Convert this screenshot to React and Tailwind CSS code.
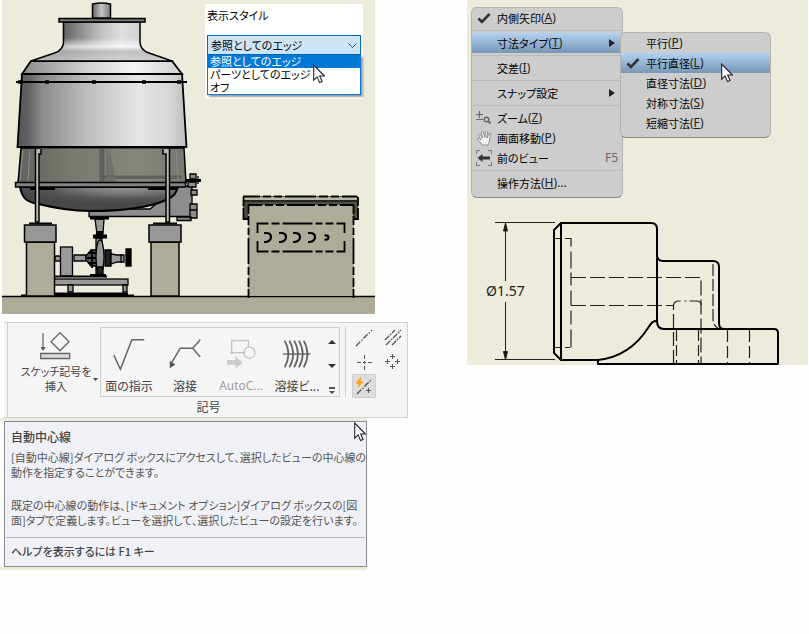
import { useState } from "react";

const jpFont = "font-['Noto_Sans_CJK_JP',sans-serif] [font-feature-settings:'palt','kern']";

const edgeStyles = ["参照としてのエッジ", "パーツとしてのエッジ", "オフ"];

const menuGroups = [
  [{ label: "内側矢印", hotkey: "A", icon: "check" }],
  [{ label: "寸法タイプ", hotkey: "T", active: true, arrow: true }],
  [{ label: "交差", hotkey: "I" }],
  [{ label: "スナップ設定", arrow: true }],
  [
    { label: "ズーム", hotkey: "Z", icon: "zoom" },
    { label: "画面移動", hotkey: "P", icon: "pan" },
    { label: "前のビュー", shortcut: "F5", icon: "back" }
  ],
  [{ label: "操作方法", hotkey: "H", more: true }]
];

const dimensionTypes = [
  { label: "平行", hotkey: "P" },
  { label: "平行直径", hotkey: "L", active: true, icon: "check" },
  { label: "直径寸法", hotkey: "D" },
  { label: "対称寸法", hotkey: "S" },
  { label: "短縮寸法", hotkey: "F" }
];

function Cursor({ className }) {
  return (
    <svg className={`pointer-events-none absolute h-5 w-3 ${className}`} viewBox="0 0 12 20" aria-hidden="true">
      <path d="M.7 1v15.2l3.4-3.3 2.5 5.7 2.5-1.1-2.4-5.5h4.7z" fill="#fff" stroke="#222233" strokeWidth="1.1" />
    </svg>
  );
}

function TankDrawing() {
  return (
    <svg className="block w-full" viewBox="2 0 373 314" aria-hidden="true">
      <defs>
        <linearGradient id="shell" x1="0" x2="1">
          <stop offset="0" stopColor="#555" />
          <stop offset=".07" stopColor="#656565" />
          <stop offset=".15" stopColor="#8c8c8c" />
          <stop offset=".4" stopColor="#bcbcbc" />
          <stop offset=".72" stopColor="#e6e6e6" />
          <stop offset=".9" stopColor="#d6d6d6" />
          <stop offset="1" stopColor="#bdbdbd" />
        </linearGradient>
        <linearGradient id="neck" gradientUnits="userSpaceOnUse" x1="63" x2="141" y1="0" y2="0">
          <stop offset="0" stopColor="#606060" />
          <stop offset=".2" stopColor="#8a8a8a" />
          <stop offset=".5" stopColor="#c2c2c2" />
          <stop offset=".75" stopColor="#e0e0e0" />
          <stop offset="1" stopColor="#cfcfcf" />
        </linearGradient>
        <linearGradient id="band" x1="0" x2="1">
          <stop offset="0" stopColor="#8b8b8b" />
          <stop offset=".4" stopColor="#d0d0d0" />
          <stop offset=".7" stopColor="#f5f5f5" />
          <stop offset="1" stopColor="#cfcfcf" />
        </linearGradient>
        <linearGradient id="shoulder" x1="0" y1="0" x2="0" y2="1">
          <stop offset=".4" stopColor="#fff" stopOpacity="0" />
          <stop offset=".63" stopColor="#fff" stopOpacity=".7" />
          <stop offset=".75" stopColor="#bcbcbc" stopOpacity=".8" />
          <stop offset="1" stopColor="#cfcfcf" stopOpacity=".8" />
        </linearGradient>
        <linearGradient id="lower" x1="0" x2="1">
          <stop offset="0" stopColor="#62625f" />
          <stop offset=".3" stopColor="#77786f" />
          <stop offset=".7" stopColor="#85867d" />
          <stop offset="1" stopColor="#77786f" />
        </linearGradient>
        <radialGradient id="bowl" cx=".66" cy="0" r=".7">
          <stop offset="0" stopColor="#969696" />
          <stop offset=".35" stopColor="#7d7d7d" />
          <stop offset=".7" stopColor="#555" />
          <stop offset="1" stopColor="#484848" />
        </radialGradient>
        <linearGradient id="pipe" x1="0" x2="1">
          <stop offset="0" stopColor="#666" />
          <stop offset=".5" stopColor="#c4c4c4" />
          <stop offset="1" stopColor="#777" />
        </linearGradient>
      </defs>

      <rect x="2" width="373" height="314" fill="#ecebdc" />
      <rect x="2" y="296" width="373" height="18" fill="#aeab98" />
      <path d="M2 296.5h373" stroke="#000" strokeWidth="1.5" />

      {/* outlet box and side flanges */}
      <g stroke="#000" strokeWidth="1.3" fill="#8d8d8d">
        <path d="M89 209H150L178 186h14v30.500H89z" />
        <path d="M177 217h14v3.500h-14zM190 174h6v5h-6zM188 182h8v5h-8zM191 190h6v5h-6zM190 204h7v6h-7zM190 210h7v8h-7z" />
        <path d="M185 180.500h16" strokeWidth="3" />
        <path d="M198 176v8" />
      </g>

      {/* bowl and translucent wall */}
      <path d="M20 187c2 9 5 14 14 16 20 5 38 8 56 8 31 0 60-4 76-11 8-3 10-7 12-13z" fill="url(#bowl)" stroke="#000" strokeWidth="2" />
      <path d="M21 148h163l2 35H18z" fill="url(#lower)" stroke="#000" strokeWidth="1.500" />
      <path d="M100 149h4v27h78v3h-78v4h-4z" fill="#64645f" />
      <path d="M106 151h4l6 31h-10z" fill="#70716a" />
      <path d="M23 150l-3 31M30 150l-2 31M176 150l2 31" stroke="#8d8e84" />
      <path d="M100 149v33M104 149v33M104 176h78" stroke="#55554f" strokeWidth=".7" />
      <path d="M40 148.500h124" stroke="#48483f" />
      <rect x="15.500" y="182.500" width="170" height="4.500" fill="#858585" stroke="#000" strokeWidth="1.500" />
      <path d="M30 189h25M148 189h30" stroke="#000" strokeWidth="2" />

      {/* shell */}
      <path d="M22 74h160l4.500 73h-169z" fill="url(#shell)" stroke="#000" strokeWidth="1.800" />
      <path d="M31 61h141l10 13H22z" fill="url(#band)" stroke="#000" strokeWidth="1.800" />
      <path d="M63.500 22v20c0 6-3 9-9 11L31 61h141l-23-8c-6-2-9-6-9-11V22z" fill="url(#neck)" />
      <path d="M63.500 22v20c0 6-3 9-9 11L31 61h141l-23-8c-6-2-9-6-9-11V22z" fill="url(#shoulder)" stroke="#000" strokeWidth="1.500" />
      <path d="M16 82h171" stroke="#000" strokeWidth="1.800" />
      <path d="M18 82h5M45 82h4M92 82h4M142 82h4M177 82h4" stroke="#000" strokeWidth="3.500" />
      <path d="M17 147h170" stroke="#000" strokeWidth="2" />
      <rect x="59" y="18.500" width="86" height="3.500" fill="#777" stroke="#000" strokeWidth="1.500" />
      <path d="M92.500 18V4q9-2 18 0v14z" fill="url(#pipe)" stroke="#000" strokeWidth="1.500" />

      {/* legs */}
      <path d="M35.500 149v73h3.500v-68h2v-5M169.500 149v73H166v-68h-3v-5" fill="#b9b9b7" stroke="#000" strokeWidth="1.500" />

      {/* pump */}
      <g stroke="#000" strokeWidth="1.300" fill="#999">
        <path d="M95 219h9l-1 15h-6zM96 238h6v38h-6z" />
        <path d="M90 218h19" strokeWidth="3" />
        <path d="M93 236.500h14M96 233h7" strokeWidth="4" />
        <path d="M55 256h6v5h-6zM74 255h12v6H74z" />
        <rect x="60.500" y="247" width="12" height="29" />
        <path d="M86 256l5-6h6v16h-6l-5-6z" fill="#555" />
        <path d="M88 253h12M87 258h12M88 263h12M92 249v19" strokeWidth="1.800" />
        <ellipse cx="100" cy="257" rx="4" ry="17" />
        <path d="M105 250h6v16h-6z" fill="#222" />
        <path d="M111 254l6 1h7v7h-7l-6 2zM121 254v9" />
        <path d="M126 249h5v17h-5z" fill="#000" />
        <path d="M97 267h6v7h-6z" fill="#222" />
        <path d="M55 276.500h52M90 275h16" strokeWidth="2" />
        <rect x="54" y="279" width="74" height="6" />
        <path d="M68 285h5v7h-5zM123 285h4v7h-4z" />
        <path d="M55 293.500h73M55 295.500h79" strokeWidth="1.800" />
      </g>

      {/* pedestals */}
      <g stroke="#000" strokeWidth="1.500">
        <path d="M26.500 242h28v54h-28zM151 242h28v54h-28z" fill="#aeab98" />
        <path d="M24.500 225h31.500v17H24.500zM149 225h32v17h-32z" fill="#989898" />
        <path d="M29 223.500h23M153 223.500h24" strokeWidth="2" />
        <path d="M21 295.500h6" strokeWidth="2" />
      </g>

      {/* cabinet */}
      <path d="M248 205h106v91H248z" fill="#aeab98" />
      <path d="M243 196h115v23h-5v-14H248v14h-5z" fill="#4d4e42" />
      <path d="M244 197h113v3H244z" fill="#b7b8a0" />
      <g fill="none" stroke="#000" strokeWidth="1.800">
        <path d="M243 196.500h17m3 0h8m3 0h8m3 0h31m3 0h9m3 0h8m3 0h15" />
        <path d="M244 201h113" strokeWidth="1.200" />
        <path d="M248 205h14m3 0h8m3 0h8m3 0h28m3 0h8m3 0h8m3 0h14" />
        <path d="M243.500 197v9m0 2v11h5M358 197v9m0 2v11h-5" />
        <path d="M248.500 205v9m0 2v9m0 3v7m0 3v26m0 3v8m0 3v9m0 2v9M353.500 205v9m0 2v9m0 3v7m0 3v26m0 3v8m0 3v9m0 2v9" />
        <path d="M257.500 233v-9.500h11m3 0h8m3 0h30m3 0h7m3 0h8m3 0h8V233M257.500 241v10.500h11m3 0h8m3 0h30m3 0h7m3 0h8m3 0h8V241" />
        <path
          d="M264 233h2q5 0 5 4t-5 5h-2M279 233h2q5 0 5 4t-5 5h-2M293 233h2q5 0 5 4t-5 5h-2M308 233h2q5 0 5 4t-5 5h-2M324.500 235.500q4-.5 4 2t-4 2"
          strokeWidth="2.200"
        />
      </g>
    </svg>
  );
}

function PartDrawing() {
  return (
    <svg className="mt-3 block w-full" viewBox="467 210 341 155" role="img" aria-label="Ø1.57">
      <g fill="none" stroke="#222" strokeWidth="1">
        <path d="M495 222.500h60M495 359.500h60M505.500 224v57M505.500 302v57" />
        <path d="M505.500 223l-2 8h4zM505.500 359.500l-2-8h4z" fill="#111" />
      </g>
      <text x="486" y="296" className="fill-[#222] font-['Noto_Sans',sans-serif] text-[14px]">
        Ø1.57
      </text>
      <g fill="none" stroke="#222" strokeWidth="1.200">
        <path d="M554 238.500h6m5 0h6v8m0 5v17m0 4v13m0 5v15m0 5v14m0 5v18m-1 0h-5m-5 0h-6" />
        <path d="M571 277.500h130v87" strokeDasharray="15 4" />
        <path d="M571 305.500h103" strokeDasharray="15 4" />
        <path d="M673.500 364v-59q1-4 5-4h8m3 0h7q4 0 5 4" strokeDasharray="14 4" />
        <path d="M676.500 330v34M698.500 330v34" strokeDasharray="11 4" />
        <path d="M727.500 330v34M749.500 330v34" strokeDasharray="12 4" />
        <path d="M713 264v54q0 8 5 10" strokeDasharray="12 3" />
      </g>
      <g fill="none" stroke="#000" strokeWidth="2" strokeLinejoin="round">
        <path d="M598 360H561l-7-7V230l7-7h90q6 0 6 6v92M561 223v137" />
        <path d="M657 255q0 6 6 6h50q6 0 6 6v56q0 6 5 6" />
        <path d="M598 360c27-3 41-18 50-32 4-6 5-7 9-7q0 8 7 8h110q4 0 4 4v31H598z" />
      </g>
    </svg>
  );
}

function MenuIcon({ name }) {
  return (
    <svg className="h-4 w-4" viewBox="0 0 16 16" fill="none" aria-hidden="true">
      {name === "check" && <path d="M2.500 8.500l3.500 3.500 7.500-8" stroke="#333" strokeWidth="2.600" />}
      {name === "zoom" && (
        <>
          <path d="M0 4.500h7M3.500 1v7M0 9.500h7" stroke="#666" strokeWidth="1.200" />
          <circle cx="10.500" cy="9.500" r="2.300" stroke="#666" strokeWidth="1.400" />
          <path d="M12 11l2.500 2.500" stroke="#666" strokeWidth="1.800" />
        </>
      )}
      {name === "pan" && (
        <path
          d="M6 15c-1-3-4-4-5-6 1-1 3 0 4 1L2.500 4.500q1-1 2 0L6.500 8 5.500 2q1-1 2 0L9 7.500 9.500 2q1-1 2 0L11 8l2-4.500q1.500-.5 1.500.5L13.500 10c0 2-1 3-1.500 5z"
          fill="#f5f5f5"
          stroke="#777"
          strokeWidth=".8"
        />
      )}
      {name === "back" && (
        <>
          <path d="M4 .5H.5V4M12 .5h3.500V4M4 15.500H.5V12M12 15.500h3.500V12" stroke="#777" />
          <path d="M1.500 8l5-4v2.500H14v3H6.500V12z" fill="#333" />
        </>
      )}
    </svg>
  );
}

function MenuRow({ item }) {
  return (
    <button
      type="button"
      role="menuitem"
      className={`flex h-5 w-full items-center whitespace-nowrap pr-1 text-left text-[11px] leading-5 text-black ${
        item.active ? "bg-linear-to-b from-[#b3d2f2] to-[#7897b6]" : ""
      }`}
    >
      <span className="flex w-[25px] shrink-0 pl-1">{item.icon && <MenuIcon name={item.icon} />}</span>
      <span>{item.label}</span>
      {item.hotkey && (
        <span className="font-['Noto_Sans',sans-serif] text-[12px] text-[#222]">
          (<u>{item.hotkey}</u>){item.more && "..."}
        </span>
      )}
      {item.shortcut && <span className="ml-auto font-['Noto_Sans',sans-serif] text-[12px] text-[#666]">{item.shortcut}</span>}
      {item.arrow && (
        <svg className="ml-auto mr-0.5 h-2 w-2" viewBox="0 0 8 8" aria-hidden="true">
          <path d="M1 0l6 4-6 4z" fill="#222" />
        </svg>
      )}
    </button>
  );
}

function ContextMenu() {
  return (
    <div
      role="menu"
      className={`relative h-[191px] w-38 rounded-md border border-[#b4b4ac] border-b-[#888] bg-[#cdcdcd] ${jpFont}`}
    >
      {menuGroups.map((group, i) => (
        <div key={group[0].label}>
          {i > 0 && (
            <div className="flex h-[5px] items-center">
              <div className="h-px w-full bg-[#bababa]" />
            </div>
          )}
          {group.map((item) => (
            <MenuRow key={item.label} item={item} />
          ))}
        </div>
      ))}

      <div
        role="menu"
        className="absolute left-[148px] top-6 h-[106px] w-[151px] rounded-md border border-[#b4b4ac] border-b-[#888] bg-[#cdcdcd]"
      >
        {dimensionTypes.map((item) => (
          <MenuRow key={item.label} item={item} />
        ))}
        <Cursor className="left-[100px] top-[30px]" />
      </div>
    </div>
  );
}

function StyleDialog() {
  const [style, setStyle] = useState(edgeStyles[0]);

  return (
    <div className={`absolute left-[203px] top-1 h-[95px] w-[158px] bg-white pl-0.5 pr-0.5 text-[11px] text-black ${jpFont}`}>
      <label htmlFor="edge-style" className="block h-[31px] leading-[22px]">
        表示スタイル
      </label>
      <div className="relative">
        <select
          id="edge-style"
          value={style}
          onChange={(e) => setStyle(e.target.value)}
          className="block h-5 w-full appearance-none border border-[#0067b4] bg-[#cce4f7] px-[3px] leading-4 outline-none"
        >
          {edgeStyles.map((name) => (
            <option key={name}>{name}</option>
          ))}
        </select>
        <svg className="pointer-events-none absolute right-1 top-2 h-[5px] w-[9px]" viewBox="0 0 9 5" fill="none" aria-hidden="true">
          <path d="M.5.5l4 4 4-4" stroke="#444" />
        </svg>
      </div>
      <ul role="listbox" className="border border-t-0 border-[#0078d7] bg-white leading-[13px] shadow-[2px_2px_2px_#999]">
        {edgeStyles.map((name) => (
          <li
            key={name}
            role="option"
            aria-selected={name === style}
            onClick={() => setStyle(name)}
            className={`h-[13px] pl-0.5 ${name === style ? "bg-[#0078d7] text-white" : ""}`}
          >
            {name}
          </li>
        ))}
      </ul>
      <Cursor className="left-[108px] top-[60px]" />
    </div>
  );
}

function GalleryButton({ label, disabled, children }) {
  return (
    <button
      type="button"
      disabled={disabled}
      className={`flex w-14 flex-col items-center whitespace-nowrap pt-1.5 ${disabled ? "text-[#999]" : "text-[#444]"}`}
    >
      <svg className="h-11 w-11" viewBox="0 0 44 44" fill="none" aria-hidden="true">
        {children}
      </svg>
      <span className="leading-5">{label}</span>
    </button>
  );
}

function ToolButton({ label, active, children }) {
  return (
    <button
      type="button"
      aria-label={label}
      className={`flex h-6 w-6 items-center justify-center border ${active ? "border-[#cfcfcf] bg-[#dcdcdc]" : "border-transparent"}`}
    >
      <svg className="h-[18px] w-[18px]" viewBox="0 0 18 18" fill="none" stroke="#555" strokeWidth="1.300" aria-hidden="true">
        {children}
      </svg>
    </button>
  );
}

function Ribbon() {
  return (
    <section className={`ml-1 mt-2 h-24 w-[404px] border-y border-[#d2d2d2] bg-[#f5f5f5] text-[12px] text-[#444] ${jpFont}`}>
      <div className="ml-[3px] flex h-[94px] border-x border-[#d2d2d2]">
        <div className="w-[337px]">
          <div className="flex pt-1">
            <button type="button" className="relative flex w-[92px] flex-col items-center pl-1 pt-[5px] text-[11px] leading-[15px]">
              <svg className="h-8 w-8" viewBox="0 0 32 32" fill="none" stroke="#666" strokeWidth="1.300" aria-hidden="true">
                <path d="M3 1v16" />
                <path d="M.5 15h5L3 19z" fill="#555" stroke="none" />
                <path d="M20 .8l9 9-9 9-9-9z" />
                <path d="M.7 21.500h29v5h-29z" fill="#dadcda" />
              </svg>
              <span>
                スケッチ記号を
                <br />
                挿入
              </span>
              <svg className="absolute bottom-4 right-0.5 h-[3px] w-[5px]" viewBox="0 0 5 3" aria-hidden="true">
                <path d="M0 0h5L2.500 3z" fill="#444" />
              </svg>
            </button>

            <div className="flex h-[70px] w-[240px] border border-[#cfcfcf]">
              <GalleryButton label="面の指示">
                <path d="M6 22l7 15L25 6h13" stroke="#666" strokeWidth="1.600" />
              </GalleryButton>
              <GalleryButton label="溶接">
                <path d="M8 30l9-15h13l8-9M30 15l8 9" stroke="#666" strokeWidth="1.500" />
                <path d="M6 28l6 4-6 4z" fill="#555" />
              </GalleryButton>
              <GalleryButton label={<span className="font-['Open_Sans',sans-serif]">AutoC...</span>} disabled>
                <path d="M12 20V7h18v7M26 20H12" stroke="#c4c4c4" strokeWidth="1.400" />
                <path d="M10.500 18.500h3v3h-3z" fill="#c4c4c4" />
                <circle cx="31" cy="20" r="6" stroke="#c4c4c4" strokeWidth="1.400" />
                <path d="M7 28h9v-4l8 6.500-8 6.500v-4H7z" fill="#ccc" />
              </GalleryButton>
              <GalleryButton label="溶接ビ...">
                <path
                  d="M9 7q8 14 0 28M14 7q8 14 0 28M19 7q8 14 0 28M24 7q8 14 0 28M29 7q8 14 0 28"
                  stroke="#666"
                  strokeWidth="1.800"
                />
                <path d="M7 21h29" stroke="#555" strokeWidth="1.300" />
              </GalleryButton>
              <div className="flex w-[14px] flex-col items-center justify-between pb-px pt-3">
                <button type="button" aria-label="上へ">
                  <svg className="block h-1 w-2" viewBox="0 0 8 4">
                    <path d="M0 4l4-4 4 4z" fill="#333" />
                  </svg>
                </button>
                <button type="button" aria-label="下へ">
                  <svg className="block h-1 w-2" viewBox="0 0 8 4">
                    <path d="M0 0h8L4 4z" fill="#333" />
                  </svg>
                </button>
                <button type="button" aria-label="展開">
                  <svg className="block h-2 w-2" viewBox="0 0 8 8">
                    <path d="M1 0h6v2H1zM1 4h6L4 7z" fill="#555" />
                  </svg>
                </button>
              </div>
            </div>
          </div>
          <p className="pl-16 text-center leading-[19px]">記号</p>
        </div>

        <div className="mt-[3px] grid h-[71px] grid-cols-[24px_24px] content-between gap-x-[5px] border-l border-[#cfcfcf] pl-[6px]">
          <ToolButton label="中心線">
            <path d="M1 17L17 1" strokeDasharray="6 1.500 1.500 1.500" />
          </ToolButton>
          <ToolButton label="二等分中心線">
            <path d="M1 11L11 1M2 16L17 1M8 16l9-9" strokeDasharray="6 1 2 1" />
          </ToolButton>
          <ToolButton label="中心マーク">
            <path d="M2 9.500h4M8 9.500h3M13 9.500h4M9.500 2v4M9.500 8v3M9.500 13v4" strokeWidth="1" />
          </ToolButton>
          <ToolButton label="中心のパターン">
            <path d="M6 3.500h5M8.500 1v5M1 8.500h5M3.500 6v5M11 8.500h5M13.500 6v5M6 13.500h5M8.500 11v5" strokeWidth="1" />
          </ToolButton>
          <ToolButton label="自動中心線" active>
            <path d="M2 17L17 2" strokeDasharray="6 1.500 1.500 1.500" />
            <path d="M11 13.500h5M13.500 11v5" strokeWidth="1" />
            <path d="M5 1L1 6l3 .5L3 10l5-5-3-.5L6 1z" fill="#fba414" stroke="#fba414" strokeWidth=".6" />
          </ToolButton>
        </div>
      </div>
    </section>
  );
}

function HelpTooltip() {
  return (
    <div
      role="tooltip"
      className={`relative ml-1 border border-[#8a8a8a] bg-[#f0f1f7] text-[12px] leading-[15px] text-[#555] ${jpFont}`}
    >
      <div className="whitespace-nowrap pb-[9px] pl-[6px] pt-[7px]">
        <h2 className="mb-[6px] font-medium text-[#444]">自動中心線</h2>
        <div className="text-[11px]">
          <p>
            [自動中心線]ダイアログ ボックスにアクセスして、選択したビューの中心線の
            <br />
            動作を指定することができます。
          </p>
          <p className="mt-[18px]">
            既定の中心線の動作は、[ドキュメント オプション]ダイアログ ボックスの[図
            <br />
            面]タブで定義します。ビューを選択して、選択したビューの設定を行います。
          </p>
        </div>
      </div>
      <p className="mx-px border-t border-[#b5b8b8] px-[5px] pb-[7px] pt-[6px] text-[11px] font-medium text-[#444]">
        ヘルプを表示するには F1 キー
      </p>
      <Cursor className="left-[349px] top-0" />
    </div>
  );
}

export default function App() {
  return (
    <main className="grid min-h-screen grid-cols-[465fr_344fr] items-start bg-[#fefefe]">
      <div>
        <div className="relative ml-0.5 max-w-[373px]">
          <TankDrawing />
          <StyleDialog />
        </div>
        <Ribbon />
        <div className="w-fit border-y-[3px] border-[#ecebdc]">
          <HelpTooltip />
        </div>
      </div>

      <section className="ml-0.5 mr-px bg-[#ecebdc] pl-1 pt-[7px]">
        <ContextMenu />
        <div className="-ml-1">
          <PartDrawing />
        </div>
      </section>
    </main>
  );
}
